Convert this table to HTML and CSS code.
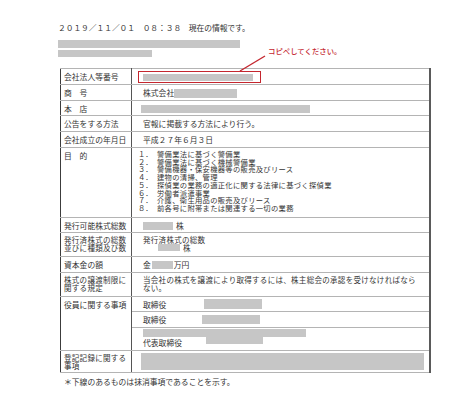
FILE: index.html
```html
<!DOCTYPE html>
<html lang="ja">
<head>
<meta charset="utf-8">
<link rel="stylesheet" href="styles.css">
</head>
<body>
<div class="page">
  <div class="date">２０１９／１１／０１　０８：３８　現在の情報です。</div>
  <div class="mask mask-1"></div>
  <div class="mask mask-2"></div>

  <table class="sheet">
    <colgroup><col class="c-label"><col class="c-value"></colgroup>
    <tr class="h16">
      <th>会社法人等番号</th>
      <td><span class="mask m-number"></span></td>
    </tr>
    <tr class="h16">
      <th>商　号</th>
      <td>株式会社<span class="mask m-name"></span></td>
    </tr>
    <tr class="h15">
      <th>本　店</th>
      <td><span class="mask m-addr"></span></td>
    </tr>
    <tr class="h16">
      <th>公告をする方法</th>
      <td>官報に掲載する方法により行う。</td>
    </tr>
    <tr class="h16">
      <th>会社成立の年月日</th>
      <td>平成２７年６月３日</td>
    </tr>
    <tr class="h70 strong">
      <th>目　的</th>
      <td>
        <ol class="purpose">
          <li><span class="no">１．</span>警備業法に基づく警備業</li>
          <li><span class="no">２．</span>警備業法に基づく機械警備業</li>
          <li><span class="no">３．</span>警備機器・保安機器等の販売及びリース</li>
          <li><span class="no">４．</span>建物の清掃、管理</li>
          <li><span class="no">５．</span>探偵業の業務の適正化に関する法律に基づく探偵業</li>
          <li><span class="no">６．</span>労働者派遣事業</li>
          <li><span class="no">７．</span>介護、衛生用品の販売及びリース</li>
          <li><span class="no">８．</span>前各号に附帯または関連する一切の業務</li>
        </ol>
      </td>
    </tr>
    <tr class="h15 strong">
      <th>発行可能株式総数</th>
      <td><span class="mask m-shares"></span>株</td>
    </tr>
    <tr class="h24">
      <th class="two">発行済株式の総数<br>並びに種類及び数</th>
      <td class="two">発行済株式の総数<br><span class="mask m-issued"></span>株</td>
    </tr>
    <tr class="h16">
      <th>資本金の額</th>
      <td>金<span class="mask m-capital"></span>万円</td>
    </tr>
    <tr class="h24">
      <th class="two">株式の譲渡制限に<br>関する規定</th>
      <td class="two">当会社の株式を譲渡により取得するには、株主総会の承認を受けなければなら<br>ない。</td>
    </tr>
    <tr class="h15 strong">
      <th rowspan="3">役員に関する事項</th>
      <td>取締役<span class="mask m-d1"></span></td>
    </tr>
    <tr class="h16">
      <td>取締役<span class="mask m-d2"></span></td>
    </tr>
    <tr class="h23">
      <td class="rep"><span class="mask m-d3a"></span><div class="rep-line">代表取締役<span class="mask m-d3"></span></div></td>
    </tr>
    <tr class="h22 strong">
      <th class="two">登記記録に関する<br>事項</th>
      <td class="last"><span class="mask m-record"></span></td>
    </tr>
  </table>

  <p class="note">＊下線のあるものは抹消事項であることを示す。</p>

  <div class="callout">
    <span class="callout-text">コピペしてください。</span>
    <svg class="callout-line" width="30" height="18" viewBox="0 0 30 18"><line x1="27" y1="1" x2="2" y2="16" stroke="#c4262e" stroke-width="1.4"/></svg>
    <div class="callout-box"></div>
  </div>
</div>
</body>
</html>
```

FILE: styles.css
```css
html, body {
  margin: 0;
  padding: 0;
  background: #ffffff;
}

body {
  font-family: "Noto Sans CJK JP", "Noto Sans", sans-serif;
  font-size: 7.8px;
  color: #333333;
  line-height: 10px;
}

.page {
  position: relative;
  padding: 23px 0 0 58px;
}

.date {
  height: 10px;
  line-height: 10px;
  letter-spacing: -0.1px;
}

.mask {
  display: inline-block;
  background: #c6c6c6;
  vertical-align: top;
}

.mask-1 {
  display: block;
  width: 182px;
  height: 8px;
  margin-top: 7px;
}

.mask-2 {
  display: block;
  width: 94px;
  height: 7px;
  margin-top: 2px;
}

.sheet {
  margin: 11px 0 0 2px;
  border-collapse: collapse;
  width: 369px;
  table-layout: fixed;
  border: 1px solid #3c3c3c;
  border-right: 2px solid #5a5a5a;
}

.c-label { width: 71px; }
.c-value { width: 298px; }

.sheet th,
.sheet td {
  border-top: 1px solid #b4b4b4;
  border-bottom: 1px solid #b4b4b4;
  vertical-align: top;
  text-align: left;
  font-weight: normal;
  padding: 3px 0 0 0;
  line-height: 10px;
  white-space: nowrap;
}

.sheet th {
  padding-left: 3px;
  border-right: 1px solid #555555;
}

.sheet td {
  padding-left: 11px;
}

.sheet tr.strong > th,
.sheet tr.strong > td {
  border-top: 1px solid #3c3c3c;
}

.sheet th.two,
.sheet td.two {
  font-size: 7.5px;
  letter-spacing: 0.3px;
  line-height: 8.2px;
  padding-top: 3px;
}

.h15 { height: 15px; }
.h16 { height: 16px; }
.h22 { height: 22px; }
.h23 { height: 23px; }
.h24 { height: 24px; }
.h70 { height: 70px; }

.m-number { width: 110px; height: 7px; margin: 2px 0 0 0; }
.m-name   { width: 63px; height: 9px; margin-top: 1px; }
.m-addr   { width: 169px; height: 8px; margin: 1px 0 0 -2px; }
.m-shares { width: 30px; height: 8px; margin: 1px 3px 0 0; }
.m-issued { width: 22px; height: 7px; margin: 0 3px 0 15px; }
.m-capital{ width: 21px; height: 8px; margin: 1px 1px 0 1px; }
.m-d1     { width: 58px; height: 10px; margin: -1px 0 0 38px; }
.m-d2     { width: 58px; height: 9px; margin: 0 0 0 36px; }
.m-d3     { width: 57px; height: 9px; margin: -3px 0 0 24px; }
.m-d3a    { display: block; width: 163px; height: 8px; margin-top: -1px; }
.m-record { display: block; width: 283px; height: 17px; margin: -1px 0 0 -2px; }

.sheet td.rep { padding-top: 2px; }
.rep-line { margin-top: 1px; line-height: 10px; }

.purpose {
  list-style: none;
  margin: 0;
  padding: 0;
  font-size: 7.3px;
  letter-spacing: 0.3px;
  line-height: 7.7px;
}

.purpose li {
  display: flex;
}

.purpose .no {
  width: 19px;
  flex: none;
  margin-left: -5px;
  text-align: left;
  letter-spacing: 0;
}

.note {
  margin: 4px 0 0 6px;
  line-height: 10px;
}

.callout {
  position: absolute;
  left: 0;
  top: 0;
  width: 0;
  height: 0;
}

.callout-text {
  position: absolute;
  left: 268px;
  top: 46px;
  color: #c4262e;
  font-size: 7.4px;
  line-height: 10px;
  white-space: nowrap;
  font-weight: 500;
}

.callout-line {
  position: absolute;
  left: 238px;
  top: 55px;
}

.callout-box {
  position: absolute;
  left: 138px;
  top: 71px;
  width: 121px;
  height: 10px;
  border: 1.5px solid #c4262e;
}
```
